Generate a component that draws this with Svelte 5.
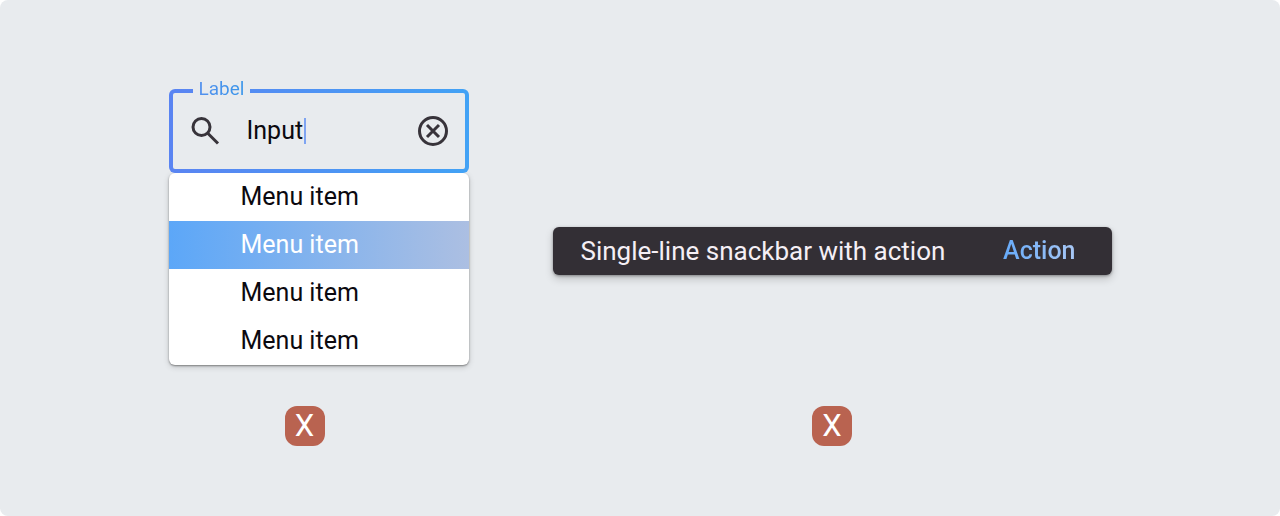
<script>
  let query = 'Input';
  let selected = 1;
  const items = ['Menu item', 'Menu item', 'Menu item', 'Menu item'];
</script>

<main class="board">
  <section class="example">
    <div class="preview">
      <div class="field">
        <label class="field-label" for="query"><span>Label</span></label>
        <svg class="icon" viewBox="0 0 32 32" aria-hidden="true">
          <circle cx="12.5" cy="12" r="8.5" />
          <path d="M18.5 18L29 28.500" />
        </svg>
        <div class="entry">
          <input id="query" type="text" autocomplete="off" bind:value={query} />
          <span class="caret"></span>
        </div>
        <button class="clear" aria-label="Clear" on:click={() => (query = '')}>
          <svg class="icon" viewBox="0 0 32 32" aria-hidden="true">
            <circle cx="16" cy="16" r="13.500" />
            <path d="M10 10L22 22M22 10L10 22" />
          </svg>
        </button>
      </div>
      <div class="menu">
        {#each items as item, i}
          <button class="menu-item" class:selected={selected === i} on:click={() => (selected = i)}>
            {item}
          </button>
        {/each}
      </div>
    </div>
    <div class="verdict field-verdict"><span class="mark">X</span></div>
  </section>

  <section class="example snackbar-example">
    <div class="preview centered">
      <div class="snackbar">
        <span class="message">Single-line snackbar with action</span>
        <button class="action">Action</button>
      </div>
    </div>
    <div class="verdict"><span class="mark">X</span></div>
  </section>
</main>

<style>
  :global(body) {
    background: #fff;
  }

  .board {
    box-sizing: border-box;
    min-height: 100vh;
    display: flex;
    justify-content: center;
    gap: 84px;
    padding: 89px 24px 70px;
    background: #e8ebee;
    border-radius: 8px;
    font-family: Roboto, sans-serif;
    font-size: 25px;
    line-height: 32px;
    color: #0b090f;
  }

  .example {
    display: flex;
    flex-direction: column;
    width: 300px;
  }
  .snackbar-example {
    width: 559px;
  }

  .preview {
    flex: 1;
  }
  .centered {
    display: flex;
    align-items: center;
    padding-top: 48px;
  }

  button,
  input {
    font: inherit;
    color: inherit;
    background: none;
    border: none;
    padding: 0;
    margin: 0;
  }
  button {
    cursor: pointer;
  }
  input:focus {
    outline: none;
  }

  .field {
    position: relative;
    box-sizing: border-box;
    height: 84px;
    display: flex;
    align-items: center;
    padding: 0 16px;
    border: 4px solid transparent;
    border-radius: 6px;
    background:
      linear-gradient(#e8ebee, #e8ebee) padding-box,
      linear-gradient(90deg, #5a84f2, #42a2f5) border-box;
  }

  .field-label {
    position: absolute;
    top: -16px;
    left: 20px;
    padding: 0 6px;
    background: #e8ebee;
    font-size: 19px;
    line-height: 24px;
  }
  .field-label span {
    color: transparent;
    background: linear-gradient(90deg, #5290ee, #3a96ea);
    background-clip: text;
  }

  .icon {
    display: block;
    width: 32px;
    height: 32px;
    fill: none;
    stroke: #37333a;
    stroke-width: 3;
  }

  .entry {
    flex: 1;
    display: flex;
    align-items: center;
    margin-left: 26px;
  }
  .entry input {
    width: 57px;
    height: 32px;
  }
  .caret {
    width: 2px;
    height: 26px;
    background: #7ea4f2;
  }

  .menu {
    overflow: hidden;
    border-radius: 6px;
    background: #fff;
    box-shadow:
      0 1px 2px rgba(0, 0, 0, 0.4),
      0 2px 6px rgba(0, 0, 0, 0.16);
  }
  .menu-item {
    display: block;
    width: 100%;
    height: 48px;
    padding-left: 72px;
    text-align: left;
  }
  .menu-item.selected {
    color: #fff;
    background: linear-gradient(90deg, #5ca7f8, #acbfe2);
  }

  .snackbar {
    flex: 1;
    display: flex;
    align-items: center;
    justify-content: space-between;
    height: 48px;
    padding: 0 36px 0 28px;
    border-radius: 6px;
    background: #332f35;
    color: #f5eff5;
    box-shadow:
      0 1px 3px rgba(0, 0, 0, 0.35),
      0 4px 9px rgba(0, 0, 0, 0.18);
  }
  .message {
    font-size: 26px;
  }
  .action {
    font-weight: 500;
    color: transparent;
    background: linear-gradient(90deg, #66aaf9, #a9c8f5);
    background-clip: text;
  }

  .verdict {
    display: flex;
    justify-content: center;
    padding-top: 41px;
  }
  .field-verdict {
    padding-right: 28px;
  }
  .mark {
    width: 40px;
    height: 40px;
    border-radius: 12px;
    background: #b96350;
    color: #fff;
    font-size: 31px;
    line-height: 40px;
    text-align: center;
  }
</style>
